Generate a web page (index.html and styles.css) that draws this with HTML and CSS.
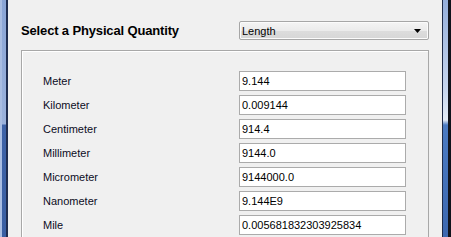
FILE: index.html
```html
<!DOCTYPE html>
<html>
<head>
    <title>Unit Converter</title>
    <link rel="stylesheet" href="styles.css">
</head>
<body>
    <div class="window">
        <div class="edge-left"></div>

        <div class="main">
            <div class="header">
                <h3>Select a Physical Quantity</h3>
                <div class="combo">
                    <span>Length</span>
                    <svg class="arrow" width="7" height="4" viewBox="0 0 7 4"><path d="M0 0H7L3.5 4Z" fill="#000"/></svg>
                </div>
            </div>

            <div class="panel">
                <label>Meter</label>        <input class="field" value="9.144">
                <label>Kilometer</label>    <input class="field" value="0.009144">
                <label>Centimeter</label>   <input class="field" value="914.4">
                <label>Millimeter</label>   <input class="field" value="9144.0">
                <label>Micrometer</label>   <input class="field" value="9144000.0">
                <label>Nanometer</label>    <input class="field" value="9.144E9">
                <label>Mile</label>         <input class="field" value="0.005681832303925834">
            </div>
        </div>

        <div class="edge-right"></div>
    </div>
</body>
</html>
```

FILE: styles.css
```css
html, body {
    margin: 0;
    height: 100%;
    overflow: hidden;
}
body {
    background: #f0f0f0;
    font-family: "Liberation Sans", Arial, sans-serif;
    font-size: 11px;
    color: #0c0c1e;
}
.window {
    display: flex;
    height: 100%;
}
.edge-left {
    width: 6px;
    flex: none;
    border-right: 2px solid #1f2d50;
    background: linear-gradient(#8aa5d6 0, #9bb2dc 124px, #3e63a8 125px, #3a5fa3 100%);
    box-shadow: inset 2px 0 0 #a9bde2;
}
.edge-right {
    width: 5px;
    flex: none;
    border-left: 1px solid #1d2a48;
    border-right: 3px solid #10131c;
    background: linear-gradient(#95afdc 0, #c7d6ef 90px, #e4ecf8 120px, #4b7bc3 125px, #3d68b0 100%);
}
.main {
    flex: 1;
    padding: 0 13px;
    display: flex;
    flex-direction: column;
}
.header {
    display: flex;
    justify-content: space-between;
    align-items: center;
    margin-top: 21px;
    height: 19px;
}
.header h3 {
    margin: 0;
    font-size: 13px;
    letter-spacing: -0.15px;
    color: #000;
}
.combo {
    height: 17px;
    width: 179px;
    border: 1px solid #a6a6a6;
    border-radius: 2px;
    background: linear-gradient(#f4f4f4, #ebebeb 50%, #dddddd 51%, #d6d6d6);
    box-shadow: inset 0 0 0 1px #fbfbfb;
    display: flex;
    align-items: center;
    justify-content: space-between;
    padding: 0 7px 0 2px;
    color: #000;
}
.arrow {
    margin-top: 1px;
}
.panel {
    flex: 1;
    margin-top: 10px;
    border: 1px solid #a8a8a8;
    border-bottom: none;
    box-shadow: inset 1px 1px 0 #fff;
    padding: 20px 22px 0 21px;
    display: grid;
    grid-template-columns: 196px 167px;
    grid-auto-rows: 20px;
    row-gap: 4px;
    align-content: start;
    overflow: hidden;
}
.panel label {
    line-height: 20px;
}
.field {
    box-sizing: border-box;
    width: 167px;
    height: 20px;
    margin: 0;
    border: 1px solid #ababab;
    background: #fff;
    padding: 0 2px;
    font-family: "Liberation Sans", Arial, sans-serif;
    font-size: 11px;
    color: #000;
    outline: none;
}
```
